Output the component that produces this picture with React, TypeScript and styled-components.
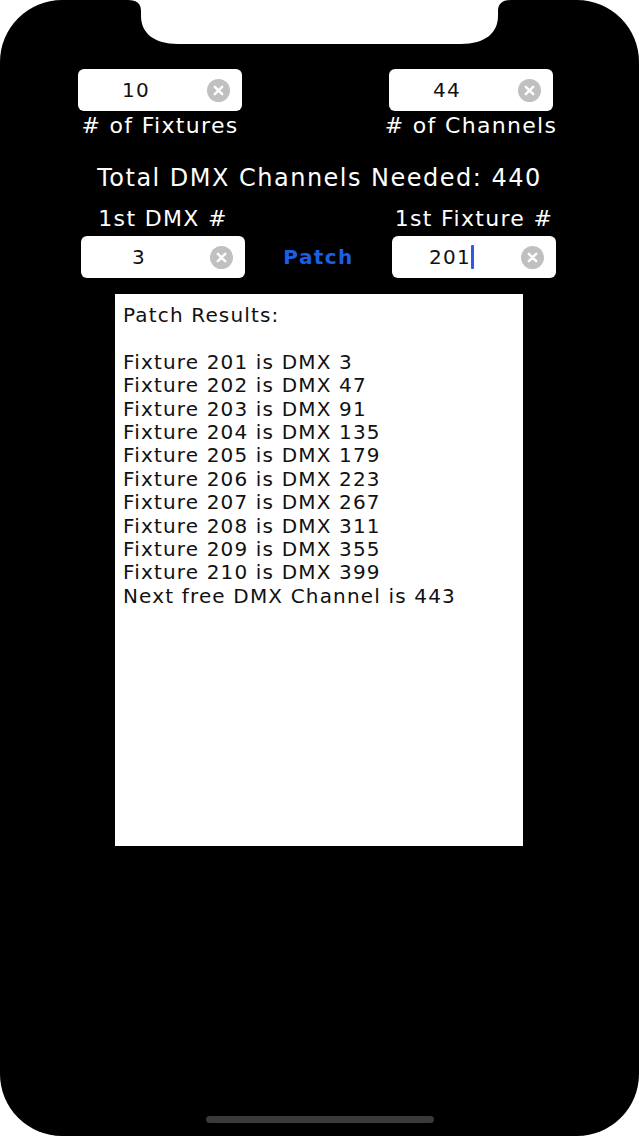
import React from "react";
import styled, { createGlobalStyle } from "styled-components";

const GlobalStyle = createGlobalStyle`
  html, body {
    margin: 0;
    padding: 0;
    background: #ffffff;
  }
  * { box-sizing: border-box; }
`;

const Screen = styled.div`
  position: relative;
  width: 639px;
  height: 1136px;
  background: #000;
  border-radius: 62px;
  overflow: hidden;
  display: flex;
  flex-direction: column;
  padding-top: 69px;
  font-family: "DejaVu Sans", "Noto Sans", sans-serif;
  color: #fff;
`;

const Notch = styled.svg`
  position: absolute;
  top: 0;
  left: 0;
`;

const TopRow = styled.div`
  display: flex;
  justify-content: space-between;
  padding: 0 86px 0 78px;
`;

const SecondRow = styled.div`
  display: flex;
  justify-content: space-between;
  align-items: flex-end;
  padding: 0 83px 0 81px;
  margin-top: 14px;
`;

const Column = styled.div`
  width: 164px;
  display: flex;
  flex-direction: column;
  align-items: center;
`;

const Label = styled.div<{ $gap: number }>`
  font-size: 22px;
  line-height: 26px;
  letter-spacing: 0.06em;
  white-space: nowrap;
  color: #fff;
  margin-top: ${(p) => p.$gap}px;
`;

const FieldBox = styled.div<{ $labelAbove?: boolean }>`
  width: 164px;
  height: 42px;
  background: #fff;
  border-radius: 6px;
  display: flex;
  align-items: center;
  padding-right: 12px;
  margin-top: ${(p) => (p.$labelAbove ? 4 : 0)}px;
`;

const Value = styled.div`
  flex: 1;
  text-align: center;
  padding-right: 13px;
  font-size: 20px;
  letter-spacing: 0.06em;
  color: #111;
  display: flex;
  justify-content: center;
  align-items: center;
`;

const Caret = styled.span`
  display: inline-block;
  width: 3px;
  height: 24px;
  background: #2c5be0;
  border-radius: 1px;
  margin-right: -3px;
`;

const ClearButton = styled.div`
  width: 23px;
  height: 23px;
  border-radius: 50%;
  background: #c0c0c2;
  display: flex;
  align-items: center;
  justify-content: center;
`;

const Total = styled.div`
  margin-top: 25px;
  text-align: center;
  font-size: 24px;
  line-height: 28px;
  letter-spacing: 0.062em;
  white-space: nowrap;
`;

const PatchButton = styled.button`
  height: 42px;
  background: none;
  border: none;
  padding: 0;
  font-family: "DejaVu Sans", sans-serif;
  font-weight: bold;
  font-size: 20px;
  letter-spacing: 0.07em;
  color: #1b5fe8;
  cursor: pointer;
`;

const ResultsBox = styled.div`
  align-self: center;
  width: 408px;
  height: 552px;
  margin-top: 16px;
  margin-left: -1px;
  background: #fff;
  color: #111;
  padding: 10px 8px;
  font-size: 20px;
  line-height: 23.4px;
  letter-spacing: 0.058em;
  white-space: pre;
`;

const ResultLine = styled.div`
  min-height: 23.4px;
`;

const HomeIndicator = styled.div`
  align-self: center;
  margin-top: auto;
  margin-bottom: 13px;
  width: 228px;
  height: 7px;
  border-radius: 4px;
  background: #3a3a3c;
`;

const ClearIcon = () => (
  <svg width="11" height="11" viewBox="0 0 11 11">
    <path d="M1.8 1.8 L9.2 9.2 M9.2 1.8 L1.8 9.2" stroke="#fff" strokeWidth="2.4" strokeLinecap="round" />
  </svg>
);

const Field = ({ value, caret, labelAbove }: { value: string; caret?: boolean; labelAbove?: boolean }) => (
  <FieldBox $labelAbove={labelAbove}>
    <Value>
      {value}
      {caret && <Caret />}
    </Value>
    <ClearButton>
      <ClearIcon />
    </ClearButton>
  </FieldBox>
);

const fixtures = 10;
const channels = 44;
const firstDmx = 3;
const firstFixture = 201;

export default function App() {
  const lines: string[] = ["Patch Results:", ""];
  for (let i = 0; i < fixtures; i++) {
    lines.push(`Fixture ${firstFixture + i} is DMX ${firstDmx + i * channels}`);
  }
  lines.push(`Next free DMX Channel is ${firstDmx + fixtures * channels}`);

  return (
    <>
      <GlobalStyle />
      <Screen>
        <Notch width="639" height="46" viewBox="0 0 639 46">
          <path
            d="M128 0 Q141 0 141 11 L141 16 C141 33 154 44 178 44 L461 44 C485 44 498 33 498 16 L498 11 Q498 0 511 0 Z"
            fill="#fff"
          />
        </Notch>
        <TopRow>
          <Column>
            <Field value={String(fixtures)} />
            <Label $gap={2}># of Fixtures</Label>
          </Column>
          <Column>
            <Field value={String(channels)} />
            <Label $gap={2}># of Channels</Label>
          </Column>
        </TopRow>
        <Total>Total DMX Channels Needed: {fixtures * channels}</Total>
        <SecondRow>
          <Column>
            <Label $gap={0}>1st DMX #</Label>
            <Field value={String(firstDmx)} labelAbove />
          </Column>
          <PatchButton>Patch</PatchButton>
          <Column>
            <Label $gap={0}>1st Fixture #</Label>
            <Field value={String(firstFixture)} caret labelAbove />
          </Column>
        </SecondRow>
        <ResultsBox>
          {lines.map((l, i) => (
            <ResultLine key={i}>{l}</ResultLine>
          ))}
        </ResultsBox>
        <HomeIndicator />
      </Screen>
    </>
  );
}
